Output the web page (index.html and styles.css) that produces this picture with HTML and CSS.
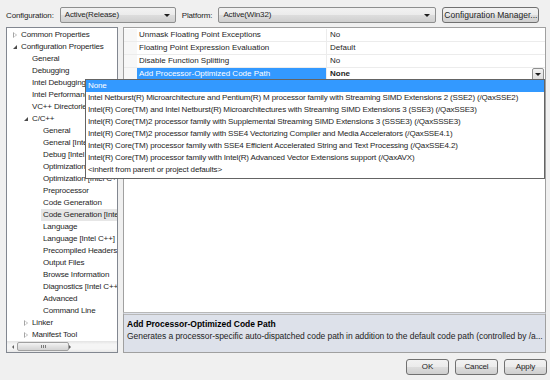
FILE: index.html
```html
<!DOCTYPE html>
<html lang="en">
<head>
    <meta charset="UTF-8">
    <title>Property Pages</title>
    <link rel="stylesheet" href="styles.css">
</head>
<body>
    <div class="topbar">
        <span class="label">Configuration:</span>
        <div class="combo combo-config">Active(Release)<span class="arrow"></span></div>
        <span class="label label-platform">Platform:</span>
        <div class="combo combo-platform">Active(Win32)<span class="arrow"></span></div>
        <div class="btn btn-manager">Configuration Manager...</div>
    </div>

    <div class="main">
        <div class="tree">
            <div class="tree-list">
                <div class="node lvl0"><span class="exp closed"></span>Common Properties</div>
                <div class="node lvl0"><span class="exp open"></span>Configuration Properties</div>
                <div class="node lvl1">General</div>
                <div class="node lvl1">Debugging</div>
                <div class="node lvl1">Intel Debugging Options</div>
                <div class="node lvl1">Intel Performance Libraries</div>
                <div class="node lvl1">VC++ Directories</div>
                <div class="node lvl1"><span class="exp open"></span>C/C++</div>
                <div class="node lvl2">General</div>
                <div class="node lvl2">General [Intel C++]</div>
                <div class="node lvl2">Debug [Intel C++]</div>
                <div class="node lvl2">Optimization</div>
                <div class="node lvl2">Optimization [Intel C++]</div>
                <div class="node lvl2">Preprocessor</div>
                <div class="node lvl2">Code Generation</div>
                <div class="node lvl2 selected">Code Generation [Intel C++]</div>
                <div class="node lvl2">Language</div>
                <div class="node lvl2">Language [Intel C++]</div>
                <div class="node lvl2">Precompiled Headers</div>
                <div class="node lvl2">Output Files</div>
                <div class="node lvl2">Browse Information</div>
                <div class="node lvl2">Diagnostics [Intel C++]</div>
                <div class="node lvl2">Advanced</div>
                <div class="node lvl2">Command Line</div>
                <div class="node lvl1"><span class="exp closed"></span>Linker</div>
                <div class="node lvl1"><span class="exp closed"></span>Manifest Tool</div>
            </div>
            <div class="vscroll">
                <span class="sarrow up"></span>
                <div class="vthumb"></div>
                <span class="sarrow down"></span>
            </div>
            <div class="hscroll">
                <span class="sarrow left"></span>
                <div class="hthumb"><span class="grip"></span></div>
                <span class="sarrow right"></span>
            </div>
            <div class="corner"></div>
        </div>

        <div class="right">
            <div class="grid">
                <div class="row">
                    <div class="gutter"></div>
                    <div class="name">Unmask Floating Point Exceptions</div>
                    <div class="value">No</div>
                </div>
                <div class="row">
                    <div class="gutter"></div>
                    <div class="name">Floating Point Expression Evaluation</div>
                    <div class="value">Default</div>
                </div>
                <div class="row">
                    <div class="gutter"></div>
                    <div class="name">Disable Function Splitting</div>
                    <div class="value">No</div>
                </div>
                <div class="row active">
                    <div class="gutter"></div>
                    <div class="name">Add Processor-Optimized Code Path</div>
                    <div class="value"><b>None</b><span class="dd-btn"><span class="arrow"></span></span></div>
                </div>
            </div>
            <div class="desc">
                <div class="desc-title">Add Processor-Optimized Code Path</div>
                <div class="desc-text">Generates a processor-specific auto-dispatched code path in addition to the default code path (controlled by /a...</div>
            </div>
        </div>
    </div>

    <div class="buttons">
        <div class="btn btn-dialog">OK</div>
        <div class="btn btn-dialog">Cancel</div>
        <div class="btn btn-dialog">Apply</div>
    </div>

    <div class="droplist">
        <div class="item current">None</div>
        <div class="item">Intel Netburst(R) Microarchitecture and Pentium(R) M processor family with Streaming SIMD Extensions 2 (SSE2) (/QaxSSE2)</div>
        <div class="item">Intel(R) Core(TM) and Intel Netburst(R) Microarchitectures with Streaming SIMD Extensions 3 (SSE3) (/QaxSSE3)</div>
        <div class="item">Intel(R) Core(TM)2 processor family with Supplemental Streaming SIMD Extensions 3 (SSSE3) (/QaxSSSE3)</div>
        <div class="item">Intel(R) Core(TM)2 processor family with SSE4 Vectorizing Compiler and Media Accelerators (/QaxSSE4.1)</div>
        <div class="item">Intel(R) Core(TM) processor family with SSE4 Efficient Accelerated String and Text Processing (/QaxSSE4.2)</div>
        <div class="item">Intel(R) Core(TM) processor family with Intel(R) Advanced Vector Extensions support (/QaxAVX)</div>
        <div class="item">&lt;inherit from parent or project defaults&gt;</div>
    </div>
</body>
</html>
```

FILE: styles.css
```css
body {
    margin: 0;
    width: 550px;
    height: 380px;
    background-color: #f0f0f0;
    font-family: "Liberation Sans", Arial, sans-serif;
    font-size: 8px;
    letter-spacing: -0.15px;
    color: #1e1e1e;
    position: relative;
    overflow: hidden;
}
.topbar {
    display: flex;
    align-items: center;
    height: 16px;
    padding: 7px 0 0 6px;
}
.label {
    margin-right: 6px;
}
.label-platform {
    margin-left: 6px;
}
.combo {
    position: relative;
    height: 14px;
    line-height: 14px;
    padding-left: 4px;
    border: 1px solid #8e8f8f;
    border-radius: 2px;
    background: linear-gradient(#f2f2f2, #ebebeb 50%, #dddddd 51%, #cfcfcf);
}
.combo-config {
    width: 110px;
}
.combo-platform {
    width: 212px;
}
.combo .arrow {
    position: absolute;
    right: 5px;
    top: 6px;
}
.arrow {
    display: inline-block;
    width: 0;
    height: 0;
    border-left: 3px solid transparent;
    border-right: 3px solid transparent;
    border-top: 3px solid #1e1e1e;
}
.btn {
    height: 14px;
    line-height: 14px;
    text-align: center;
    border: 1px solid #707070;
    border-radius: 3px;
    background: linear-gradient(#f2f2f2, #ebebeb 50%, #dddddd 51%, #cfcfcf);
}
.btn-manager {
    width: 95px;
    margin-left: 6px;
    letter-spacing: 0;
    font-size: 8.5px;
}
.main {
    display: flex;
    gap: 5px;
    height: 326px;
    margin-top: 4px;
    padding-left: 6px;
}
.tree {
    width: 110px;
    border: 1px solid #828790;
    background-color: #fff;
    display: grid;
    grid-template-columns: 1fr 11px;
    grid-template-rows: 1fr 11px;
    overflow: hidden;
}
.tree-list {
    padding-top: 1px;
    overflow: hidden;
    white-space: nowrap;
}
.node {
    position: relative;
    height: 12px;
    line-height: 12px;
}
.lvl0 {
    padding-left: 14px;
}
.lvl1 {
    padding-left: 25px;
}
.lvl2 {
    padding-left: 36px;
}
.node.selected {
    background-color: #e6e6e6;
    margin-left: 34px;
    padding-left: 2px;
}
.exp {
    position: absolute;
    top: 4px;
    width: 0;
    height: 0;
}
.lvl0 .exp {
    left: 6px;
}
.lvl1 .exp {
    left: 17px;
}
.exp.closed {
    border-top: 3px solid transparent;
    border-bottom: 3px solid transparent;
    border-left: 4px solid #a5a5a5;
    top: 3px;
}
.exp.closed::after {
    content: "";
    position: absolute;
    left: -3px;
    top: -2px;
    border-top: 2px solid transparent;
    border-bottom: 2px solid transparent;
    border-left: 2px solid #fff;
}
.exp.open {
    border-left: 4px solid transparent;
    border-bottom: 4px solid #4a4a4a;
}
.vscroll {
    grid-row: 1;
    grid-column: 2;
    background: linear-gradient(to right, #e3e3e3, #f5f5f5 30%, #f5f5f5 70%, #e8e8e8);
    display: flex;
    flex-direction: column;
    align-items: center;
    border-left: 1px solid #f0f0f0;
}
.vthumb {
    width: 9px;
    height: 235px;
    margin-top: 2px;
    box-sizing: border-box;
    border: 1px solid #a0a0a0;
    border-radius: 2px;
    background: linear-gradient(to right, #f4f4f4, #e2e2e2 50%, #d4d4d4);
}
.sarrow {
    width: 0;
    height: 0;
    display: block;
}
.sarrow.up {
    margin-top: 5px;
    border-left: 2px solid transparent;
    border-right: 2px solid transparent;
    border-bottom: 2px solid #606060;
}
.sarrow.down {
    margin-top: auto;
    margin-bottom: 5px;
    border-left: 2px solid transparent;
    border-right: 2px solid transparent;
    border-top: 2px solid #606060;
}
.hscroll {
    grid-row: 2;
    grid-column: 1;
    background: linear-gradient(#e3e3e3, #f5f5f5 30%, #f5f5f5 70%, #e8e8e8);
    display: flex;
    align-items: center;
}
.hthumb {
    width: 52px;
    height: 9px;
    margin-left: 3px;
    box-sizing: border-box;
    border: 1px solid #a0a0a0;
    border-radius: 2px;
    background: linear-gradient(#f4f4f4, #e2e2e2 50%, #d4d4d4);
    display: flex;
    justify-content: center;
    align-items: center;
}
.grip {
    width: 5px;
    height: 3px;
    background: repeating-linear-gradient(to right, #7a7a7a 0 1px, transparent 1px 2px);
}
.sarrow.left {
    margin-left: 5px;
    border-top: 2px solid transparent;
    border-bottom: 2px solid transparent;
    border-right: 2px solid #606060;
}
.sarrow.right {
    margin-left: auto;
    margin-right: 5px;
    border-top: 2px solid transparent;
    border-bottom: 2px solid transparent;
    border-left: 2px solid #606060;
}
.corner {
    grid-row: 2;
    grid-column: 2;
    background-color: #f0f0f0;
}
.right {
    width: 423px;
    display: flex;
    flex-direction: column;
}
.grid {
    flex: 1;
    border: 1px solid #a0a0a0;
    border-bottom: none;
    background-color: #fff;
    padding-top: 1px;
    letter-spacing: 0;
}
.row {
    display: flex;
    height: 12px;
    line-height: 12px;
    border-bottom: 1px solid #ececec;
}
.gutter {
    width: 13px;
    background-color: #f7f7f7;
}
.name {
    width: 187px;
    padding-left: 2px;
    border-right: 1px solid #ececec;
    white-space: nowrap;
    overflow: hidden;
}
.value {
    flex: 1;
    padding-left: 3px;
    position: relative;
}
.row.active .name {
    background-color: #3399ff;
    color: #fff;
}
.dd-btn {
    position: absolute;
    right: 1px;
    top: 0;
    width: 10px;
    height: 11px;
    border: 1px solid #8e8f8f;
    border-radius: 2px;
    background: linear-gradient(#f2f2f2, #dddddd);
    display: flex;
    justify-content: center;
    align-items: center;
}
.desc {
    border: 1px solid #a0a0a0;
    border-top: 3px double #b8b8b8;
    background-color: #dde1ea;
    padding: 3px 0 0 3px;
    box-sizing: border-box;
    height: 41px;
    font-size: 8.5px;
    letter-spacing: 0;
    overflow: hidden;
}
.desc-title {
    font-weight: bold;
    color: #000;
    line-height: 12px;
}
.desc-text {
    line-height: 12px;
    white-space: nowrap;
    letter-spacing: -0.06px;
}
.buttons {
    display: flex;
    justify-content: flex-end;
    gap: 6px;
    padding-right: 3px;
    margin-top: 6px;
}
.btn-dialog {
    width: 41px;
}
.droplist {
    position: absolute;
    left: 85px;
    top: 79px;
    width: 458px;
    border: 1px solid #646464;
    background-color: #fff;
    padding-bottom: 2px;
}
.item {
    height: 12px;
    line-height: 12px;
    padding-left: 2px;
    white-space: nowrap;
    overflow: hidden;
}
.item.current {
    background-color: #3399ff;
    color: #fff;
}
```
